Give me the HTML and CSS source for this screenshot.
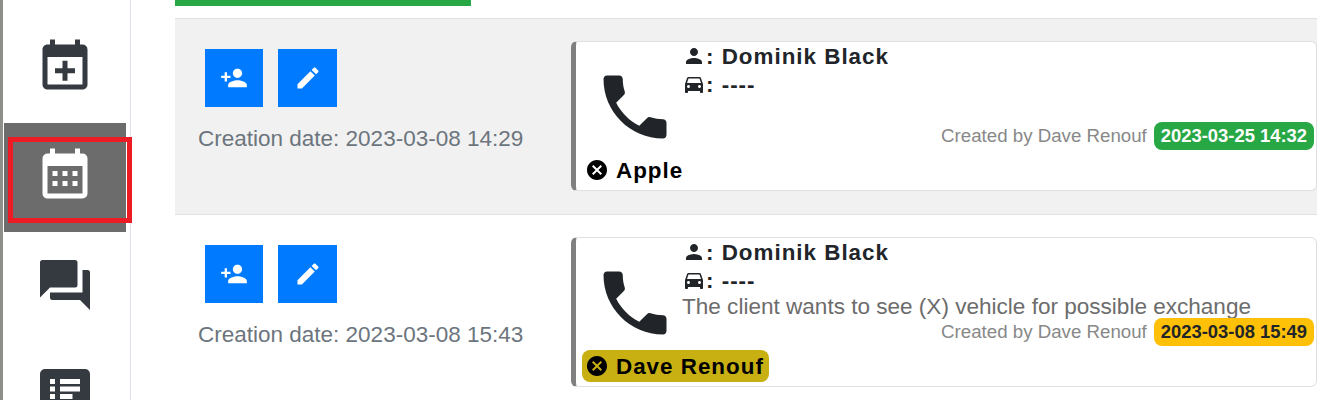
FILE: index.html
```html
<!DOCTYPE html>
<html lang="en">
<head>
<meta charset="UTF-8">
<meta name="viewport" content="width=device-width, initial-scale=1.0">
<title>Activities</title>
<link rel="stylesheet" href="styles.css">
</head>
<body>

<div class="page">
    <nav class="sidebar">
        <a class="nav-item">
            <svg class="nav-icon" viewBox="0 0 24 24"><path d="M19,19V8H5V19H19M16,1H18V3H19A2,2 0 0,1 21,5V19C21,20.11 20.1,21 19,21H5C3.89,21 3,20.1 3,19V5C3,3.89 3.89,3 5,3H6V1H8V3H16V1M11,9.5H13V12.5H16V14.5H13V17.5H11V14.5H8V12.5H11V9.5Z"/></svg>
        </a>
        <a class="nav-item active">
            <svg class="nav-icon" viewBox="0 0 24 24"><path d="M9,10V12H7V10H9M13,10V12H11V10H13M17,10V12H15V10H17M19,3A2,2 0 0,1 21,5V19A2,2 0 0,1 19,21H5C3.89,21 3,20.1 3,19V5A2,2 0 0,1 5,3H6V1H8V3H16V1H18V3H19M19,19V8H5V19H19M9,14V16H7V14H9M13,14V16H11V14H13M17,14V16H15V14H17Z"/></svg>
        </a>
        <a class="nav-item">
            <svg class="nav-icon" viewBox="0 0 24 24"><path d="M21,6H19V15H6V17A1,1 0 0,0 7,18H18L22,22V7A1,1 0 0,0 21,6M17,12V3A1,1 0 0,0 16,2H3A1,1 0 0,0 2,3V17L6,13H16A1,1 0 0,0 17,12Z"/></svg>
        </a>
        <a class="nav-item">
            <svg class="nav-icon" viewBox="0 0 24 24"><path fill-rule="evenodd" d="M4 2h16a2 2 0 0 1 2 2v16a2 2 0 0 1-2 2H4a2 2 0 0 1-2-2V4a2 2 0 0 1 2-2zM6 6v2h2V6zM10 6v2h8V6zM6 9v2h2V9zM10 9v2h8V9zM6 12v2h2v-2zM10 12v2h5v-2zM6 15v2h2v-2zM10 15v2h8v-2z"/></svg>
        </a>
    </nav>

    <main class="content">
        <div class="progress"></div>

        <section class="row shaded">
            <div class="row-side">
                <div class="row-buttons">
                    <button class="btn">
                        <svg class="btn-icon" viewBox="0 0 24 24"><path d="M15 12c2.21 0 4-1.79 4-4s-1.79-4-4-4-4 1.79-4 4 1.79 4 4 4zm-9-2V7H4v3H1v2h3v3h2v-3h3v-2H6zm9 4c-2.67 0-8 1.34-8 4v2h16v-2c0-2.66-5.33-4-8-4z"/></svg>
                    </button>
                    <button class="btn wide">
                        <svg class="btn-icon" viewBox="0 0 24 24"><path d="M3 17.25V21h3.75L17.81 9.94l-3.75-3.75L3 17.25zM20.71 7.04c.39-.39.39-1.02 0-1.41l-2.34-2.34c-.39-.39-1.02-.39-1.41 0l-1.83 1.83 3.75 3.75 1.83-1.83z"/></svg>
                    </button>
                </div>
                <p class="created-on">Creation date: 2023-03-08 14:29</p>
            </div>
            <article class="card">
                <div class="card-top">
                    <svg class="phone" viewBox="0 0 24 24"><path d="M6.62 10.79c1.44 2.83 3.76 5.14 6.59 6.59l2.2-2.2c.27-.27.67-.36 1.02-.24 1.12.37 2.33.57 3.57.57.55 0 1 .45 1 1V20c0 .55-.45 1-1 1-9.39 0-17-7.61-17-17 0-.55.45-1 1-1h3.5c.55 0 1 .45 1 1 0 1.25.2 2.45.57 3.57.11.35.03.74-.25 1.02l-2.2 2.2z"/></svg>
                    <div class="card-info">
                        <div class="info-line">
                            <svg class="info-icon" viewBox="0 0 24 24"><path d="M12 12c2.21 0 4-1.79 4-4s-1.79-4-4-4-4 1.79-4 4 1.79 4 4 4zm0 2c-2.67 0-8 1.34-8 4v2h16v-2c0-2.66-5.33-4-8-4z"/></svg>
                            <span>: Dominik Black</span>
                        </div>
                        <div class="info-line">
                            <svg class="info-icon" viewBox="0 0 24 24"><path d="M18.92 6.01C18.72 5.42 18.16 5 17.5 5h-11c-.66 0-1.21.42-1.42 1.01L3 12v8c0 .55.45 1 1 1h1c.55 0 1-.45 1-1v-1h12v1c0 .55.45 1 1 1h1c.55 0 1-.45 1-1v-8l-2.08-5.99zM6.5 16c-.83 0-1.5-.67-1.5-1.5S5.67 13 6.5 13s1.5.67 1.5 1.5S7.33 16 6.5 16zm11 0c-.83 0-1.5-.67-1.5-1.5s.67-1.5 1.5-1.5 1.5.67 1.5 1.5-.67 1.5-1.5 1.5zM5 11l1.5-4.5h11L19 11H5z"/></svg>
                            <span>: ----</span>
                        </div>
                        <div class="note"></div>
                        <div class="meta">
                            <span class="meta-text">Created by Dave Renouf</span>
                            <span class="badge green">2023-03-25 14:32</span>
                        </div>
                    </div>
                </div>
                <div class="card-label">
                    <svg class="label-icon" viewBox="0 0 24 24"><path d="M12 2C6.47 2 2 6.47 2 12s4.47 10 10 10 10-4.47 10-10S17.53 2 12 2zm5 13.59L15.59 17 12 13.41 8.41 17 7 15.59 10.59 12 7 8.41 8.41 7 12 10.59 15.59 7 17 8.41 13.41 12 17 15.59z"/></svg>
                    <span>Apple</span>
                </div>
            </article>
        </section>

        <section class="row">
            <div class="row-side">
                <div class="row-buttons">
                    <button class="btn">
                        <svg class="btn-icon" viewBox="0 0 24 24"><path d="M15 12c2.21 0 4-1.79 4-4s-1.79-4-4-4-4 1.79-4 4 1.79 4 4 4zm-9-2V7H4v3H1v2h3v3h2v-3h3v-2H6zm9 4c-2.67 0-8 1.34-8 4v2h16v-2c0-2.66-5.33-4-8-4z"/></svg>
                    </button>
                    <button class="btn wide">
                        <svg class="btn-icon" viewBox="0 0 24 24"><path d="M3 17.25V21h3.75L17.81 9.94l-3.75-3.75L3 17.25zM20.71 7.04c.39-.39.39-1.02 0-1.41l-2.34-2.34c-.39-.39-1.02-.39-1.41 0l-1.83 1.83 3.75 3.75 1.83-1.83z"/></svg>
                    </button>
                </div>
                <p class="created-on">Creation date: 2023-03-08 15:43</p>
            </div>
            <article class="card">
                <div class="card-top">
                    <svg class="phone" viewBox="0 0 24 24"><path d="M6.62 10.79c1.44 2.83 3.76 5.14 6.59 6.59l2.2-2.2c.27-.27.67-.36 1.02-.24 1.12.37 2.33.57 3.57.57.55 0 1 .45 1 1V20c0 .55-.45 1-1 1-9.39 0-17-7.61-17-17 0-.55.45-1 1-1h3.5c.55 0 1 .45 1 1 0 1.25.2 2.45.57 3.57.11.35.03.74-.25 1.02l-2.2 2.2z"/></svg>
                    <div class="card-info">
                        <div class="info-line">
                            <svg class="info-icon" viewBox="0 0 24 24"><path d="M12 12c2.21 0 4-1.79 4-4s-1.79-4-4-4-4 1.79-4 4 1.79 4 4 4zm0 2c-2.67 0-8 1.34-8 4v2h16v-2c0-2.66-5.33-4-8-4z"/></svg>
                            <span>: Dominik Black</span>
                        </div>
                        <div class="info-line">
                            <svg class="info-icon" viewBox="0 0 24 24"><path d="M18.92 6.01C18.72 5.42 18.16 5 17.5 5h-11c-.66 0-1.21.42-1.42 1.01L3 12v8c0 .55.45 1 1 1h1c.55 0 1-.45 1-1v-1h12v1c0 .55.45 1 1 1h1c.55 0 1-.45 1-1v-8l-2.08-5.99zM6.5 16c-.83 0-1.5-.67-1.5-1.5S5.67 13 6.5 13s1.5.67 1.5 1.5S7.33 16 6.5 16zm11 0c-.83 0-1.5-.67-1.5-1.5s.67-1.5 1.5-1.5 1.5.67 1.5 1.5-.67 1.5-1.5 1.5zM5 11l1.5-4.5h11L19 11H5z"/></svg>
                            <span>: ----</span>
                        </div>
                        <div class="note">The client wants to see (X) vehicle for possible exchange</div>
                        <div class="meta">
                            <span class="meta-text">Created by Dave Renouf</span>
                            <span class="badge yellow">2023-03-08 15:49</span>
                        </div>
                    </div>
                </div>
                <div class="card-label assigned">
                    <svg class="label-icon" viewBox="0 0 24 24"><path d="M12 2C6.47 2 2 6.47 2 12s4.47 10 10 10 10-4.47 10-10S17.53 2 12 2zm5 13.59L15.59 17 12 13.41 8.41 17 7 15.59 10.59 12 7 8.41 8.41 7 12 10.59 15.59 7 17 8.41 13.41 12 17 15.59z"/></svg>
                    <span>Dave Renouf</span>
                </div>
            </article>
        </section>
    </main>

    <div class="annotation"></div>
</div>

</body>
</html>
```

FILE: styles.css
```css
html, body {
    margin: 0;
    height: 400px;
    overflow: hidden;
    background-color: white;
}
body {
    font-family: "Liberation Sans", Arial, sans-serif;
    color: #212529;
}
.page {
    position: relative;
    display: flex;
    height: 400px;
    overflow: hidden;
    border-left: 3px solid #8e8e8a;
}
.sidebar {
    flex: 0 0 126px;
    padding: 14px 0 0 1px;
    border-right: 1px solid #dfdfec;
}
.nav-item {
    display: flex;
    justify-content: center;
    align-items: flex-start;
    box-sizing: border-box;
    width: 122px;
    height: 109px;
    padding-top: 23px;
    fill: #343a40;
}
.nav-item.active {
    background-color: #6c6c6c;
    fill: white;
}
.nav-icon {
    width: 60px;
    height: 60px;
}
.annotation {
    position: absolute;
    left: 5px;
    top: 137px;
    width: 114px;
    height: 76px;
    border: 5px solid #ed1c24;
}
.content {
    flex: 1;
    min-width: 0;
    padding-left: 44px;
}
.progress {
    width: 296px;
    height: 6px;
    margin-bottom: 12px;
    background-color: #28a745;
}
.row {
    display: flex;
    height: 195px;
    border-top: 1px solid #dee2e6;
}
.row.shaded {
    background-color: #f1f1f1;
}
.row-side {
    flex: 0 0 396px;
    padding: 30px 0 0 23px;
    box-sizing: border-box;
}
.row-buttons {
    display: flex;
    gap: 15px;
    margin-left: 7px;
}
.btn {
    display: flex;
    justify-content: center;
    align-items: center;
    width: 58px;
    height: 58px;
    padding: 0;
    border: none;
    background-color: #007bff;
    fill: white;
}
.btn.wide {
    width: 59px;
}
.btn-icon {
    width: 28px;
    height: 28px;
}
.created-on {
    margin: 16px 0 0;
    font-size: 22.5px;
    line-height: 31px;
    color: #6c757d;
    white-space: nowrap;
}
.card {
    flex: 1;
    box-sizing: border-box;
    height: 150px;
    margin: 22px 0 0;
    border: 1px solid #dfdfdf;
    border-left: 5px solid #808080;
    border-radius: 6px;
    background-color: white;
    min-width: 0;
}
.card-top {
    display: flex;
    height: 108px;
}
.phone {
    flex: 0 0 84px;
    height: 84px;
    margin: 23px 5px 0 17px;
    fill: #212529;
}
.card-info {
    flex: 1;
    min-width: 0;
}
.info-line {
    display: flex;
    align-items: center;
    height: 28px;
    font-size: 22.4px;
    font-weight: bold;
    letter-spacing: 1px;
    white-space: nowrap;
}
.info-line span {
    padding-top: 1px;
}
.info-icon {
    width: 24px;
    height: 24px;
    fill: #212529;
}
.note {
    height: 23px;
    margin-top: 1px;
    font-size: 22.55px;
    line-height: 24px;
    color: #6c6c6c;
    white-space: nowrap;
}
.meta {
    display: flex;
    justify-content: flex-end;
    align-items: center;
    gap: 7px;
    height: 28px;
    padding-right: 2px;
}
.meta-text {
    font-size: 18.7px;
    color: #888;
}
.badge {
    display: flex;
    align-items: center;
    height: 28px;
    padding: 0 7px;
    border-radius: 8px;
    font-size: 18.4px;
    font-weight: bold;
    white-space: nowrap;
}
.badge.green {
    background-color: #28a745;
    color: white;
}
.badge.yellow {
    background-color: #ffc107;
    color: #212529;
}
.card-label {
    display: inline-flex;
    align-items: center;
    gap: 7px;
    height: 32px;
    margin: 4px 0 0 6px;
    padding: 0 5px 0 3px;
    border-radius: 8px;
    font-size: 22.4px;
    font-weight: bold;
    letter-spacing: 1px;
    color: black;
    white-space: nowrap;
}
.card-label span {
    padding-top: 2px;
}
.card-label.assigned {
    background-color: #c8b013;
}
.label-icon {
    width: 24px;
    height: 24px;
    fill: black;
}
```
